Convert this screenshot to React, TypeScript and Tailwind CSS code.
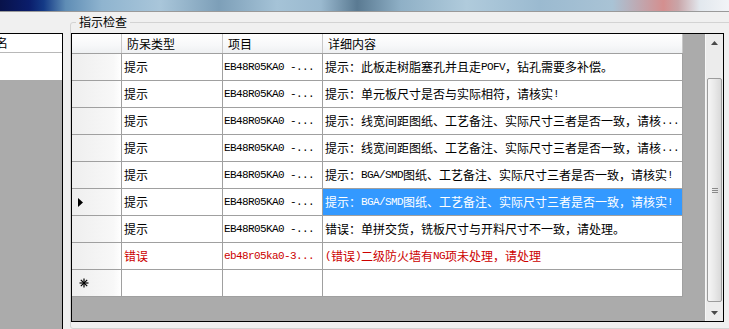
const rows = [
  { type: "提示", item: "EB48R05KA0 -...", detail: "提示：此板走树脂塞孔并且走POFV，钻孔需要多补偿。" },
  { type: "提示", item: "EB48R05KA0 -...", detail: "提示：单元板尺寸是否与实际相符，请核实!" },
  { type: "提示", item: "EB48R05KA0 -...", detail: "提示：线宽间距图纸、工艺备注、实际尺寸三者是否一致，请核..." },
  { type: "提示", item: "EB48R05KA0 -...", detail: "提示：线宽间距图纸、工艺备注、实际尺寸三者是否一致，请核..." },
  { type: "提示", item: "EB48R05KA0 -...", detail: "提示：BGA/SMD图纸、工艺备注、实际尺寸三者是否一致，请核实!" },
  { type: "提示", item: "EB48R05KA0 -...", detail: "提示：BGA/SMD图纸、工艺备注、实际尺寸三者是否一致，请核实!", current: true },
  { type: "提示", item: "EB48R05KA0 -...", detail: "错误：单拼交货，铣板尺寸与开料尺寸不一致，请处理。" },
  { type: "错误", item: "eb48r05ka0-3...", detail: "(错误)二级防火墙有NG项未处理，请处理", error: true },
];

// half-width latin runs drawn in a narrow mono face, like SimSun's ascii
function Mixed({ text }: { text: string }) {
  const parts = text.split(/([\x20-\x7e]+)/).filter(Boolean);
  return (
    <>
      {parts.map((p, i) =>
        /^[\x20-\x7e]+$/.test(p) ? (
          <span key={i} className="font-['Liberation_Mono',monospace] text-[11px] tracking-[-0.6px]">
            {p}
          </span>
        ) : (
          <span key={i}>{p}</span>
        )
      )}
    </>
  );
}

function RowHeader({ mark }: { mark?: "current" | "new" }) {
  return (
    <div className="w-[50px] h-full flex items-center pl-[6px] border-r border-[#a0a0a0] bg-[linear-gradient(to_right,#eeeeee,#f8f8f8_85%,#ffffff)]">
      {mark === "current" && (
        <svg width="5" height="9" viewBox="0 0 5 9">
          <path d="M0 0 L5 4.5 L0 9 Z" fill="#000" />
        </svg>
      )}
      {mark === "new" && (
        <svg width="10" height="10" viewBox="0 0 10 10" className="ml-px">
          <g stroke="#000" strokeWidth="1.2">
            <line x1="5" y1="0.5" x2="5" y2="9.5" />
            <line x1="0.5" y1="5" x2="9.5" y2="5" />
            <line x1="1.8" y1="1.8" x2="8.2" y2="8.2" />
            <line x1="8.2" y1="1.8" x2="1.8" y2="8.2" />
          </g>
        </svg>
      )}
    </div>
  );
}

function Scrollbar() {
  return (
    <div className="w-[18px] h-full flex flex-col bg-[#ececec] border-l border-[#f7f7f7]">
      <div className="h-[17px] flex items-center justify-center">
        <svg width="7" height="4" viewBox="0 0 7 4">
          <path d="M0 4 L3.5 0 L7 4 Z" fill="#4a4a4a" />
        </svg>
      </div>
      <div className="flex-1 pt-[27px] px-px">
        <div className="h-[224px] rounded-[2px] border border-[#9c9c9c] bg-[linear-gradient(to_right,#f6f6f6,#e9e9e9_50%,#d9d9d9)] flex flex-col items-center justify-center gap-px">
          <div className="w-[6px] h-px bg-[#8a8a8a]" />
          <div className="w-[6px] h-px bg-[#8a8a8a]" />
          <div className="w-[6px] h-px bg-[#8a8a8a]" />
        </div>
      </div>
      <div className="h-[17px] flex items-center justify-center">
        <svg width="7" height="4" viewBox="0 0 7 4">
          <path d="M0 0 L3.5 4 L7 0 Z" fill="#4a4a4a" />
        </svg>
      </div>
    </div>
  );
}

function Grid() {
  return (
    <div className="w-[653px] h-[289px] mt-px border border-black flex bg-[#ababab]">
      <div className="flex-1 flex flex-col">
        <div className="flex h-[20px] border-b border-[#a0a0a0] w-[611px] bg-[linear-gradient(to_bottom,#ffffff,#f7f8f9_60%,#eef0f2)]">
          <div className="w-[50px] border-r border-[#c8c8c8]" />
          <div className="w-[101px] border-r border-[#c8c8c8] pl-[5px] flex items-center">防呆类型</div>
          <div className="w-[100px] border-r border-[#c8c8c8] pl-[5px] flex items-center">项目</div>
          <div className="w-[360px] border-r border-[#c8c8c8] pl-[5px] flex items-center">详细内容</div>
        </div>
        {rows.map((r, i) => (
          <div key={i} className="flex h-[27px] w-[611px] border-b border-[#a0a0a0]">
            <RowHeader mark={r.current ? "current" : undefined} />
            <div
              className={`w-[101px] bg-white border-r border-[#a0a0a0] pl-[2px] flex items-center ${
                r.error ? "text-[#cc0000]" : "text-black"
              }`}
            >
              {r.type}
            </div>
            <div
              className={`w-[100px] bg-white border-r border-[#a0a0a0] pl-px flex items-center font-['Liberation_Mono',monospace] text-[11px] tracking-[-0.6px] ${
                r.error ? "text-[#cc0000]" : "text-black"
              }`}
            >
              {r.item}
            </div>
            <div
              className={`w-[360px] border-r border-[#a0a0a0] pl-[2px] flex items-center whitespace-nowrap overflow-hidden ${
                r.current ? "bg-[#3399ff] text-white" : r.error ? "bg-white text-[#cc0000]" : "bg-white text-black"
              }`}
            >
              <Mixed text={r.detail} />
            </div>
          </div>
        ))}
        <div className="flex h-[27px] w-[611px] border-b border-[#a0a0a0]">
          <RowHeader mark="new" />
          <div className="w-[101px] bg-white border-r border-[#a0a0a0]" />
          <div className="w-[100px] bg-white border-r border-[#a0a0a0]" />
          <div className="w-[360px] bg-white border-r border-[#a0a0a0]" />
        </div>
      </div>
      <Scrollbar />
    </div>
  );
}

function LeftPanel() {
  return (
    <div className="w-[63px] mt-[21px] border-t border-r border-black flex flex-col bg-[#ababab]">
      <div className="h-[19px] bg-white border-b border-[#b8b8b8] flex items-center overflow-hidden">
        <span className="-ml-[4px]">名</span>
      </div>
      <div className="h-[27px] bg-white" />
    </div>
  );
}

export default function App() {
  return (
    <div className="w-[729px] h-[329px] overflow-hidden bg-[#f0f0f0] flex flex-col text-[12px] leading-none text-black font-['Noto_Sans_CJK_SC','Noto_Sans',sans-serif]">
      <div className="h-[11px] shrink-0 bg-[linear-gradient(to_right,#08124a_0%,#0a1d6b_4%,#143a86_6%,#5f8db5_9%,#8fb4cf_14%,#a9c6da_22%,#7d9fb8_30%,#a5c3d7_38%,#9ab9cf_44%,#5a7a92_49%,#8fb0c6_55%,#b0cbdc_64%,#9bbad0_74%,#a9c3d5_84%,#d48f8f_91%,#c9a5a8_93%,#e2e8ee_96%,#f2f4f7_100%)]" />
      <div className="h-px shrink-0 bg-[#9a9a9a]" />
      <div className="flex flex-1 min-h-0">
        <LeftPanel />
        <div className="w-[7px] shrink-0" />
        <fieldset className="flex-1 min-w-0 border border-[#d3d3d3] rounded-[3px] mr-[-4px]">
          <legend className="ml-[5px] px-[3px] leading-[20px] text-black">指示检查</legend>
          <Grid />
        </fieldset>
      </div>
    </div>
  );
}
